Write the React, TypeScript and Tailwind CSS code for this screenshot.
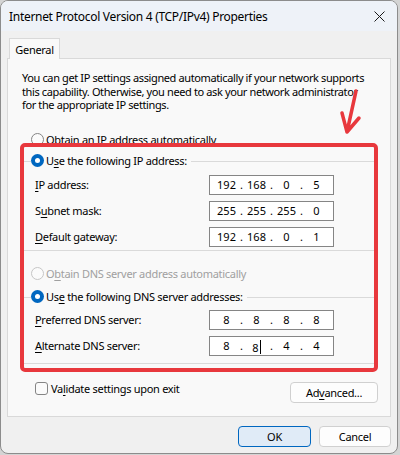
import { Fragment, ReactNode } from 'react';

const line = 'border-[#dadada]';

function Radio({ checked = false, disabled = false }: { checked?: boolean; disabled?: boolean }) {
  if (checked) {
    return (
      <span className="flex size-[13px] shrink-0 items-center justify-center rounded-full bg-[#0067c0]">
        <span className="size-[5px] rounded-full bg-white" />
      </span>
    );
  }
  return (
    <span
      className={`size-[13px] shrink-0 rounded-full border bg-[#fbfbfb] ${
        disabled ? 'border-[#c6c6c6]' : 'border-[#858585]'
      }`}
    />
  );
}

function IpBox({ parts, caret }: { parts: string[]; caret?: number }) {
  return (
    <div className="flex h-[20px] w-[125px] items-center border border-[#858585] bg-white pl-[3px] tracking-normal">
      {parts.map((p, i) => (
        <Fragment key={i}>
          <span className="w-[27px] text-center">
            {p}
            {caret === i && <span className="ml-px inline-block h-[14px] w-px translate-y-[2px] bg-black" />}
          </span>
          {i < 3 && <span className="w-[3px] text-center">.</span>}
        </Fragment>
      ))}
    </div>
  );
}

function Row({ label, children }: { label: ReactNode; children: ReactNode }) {
  return (
    <div className="flex h-[26px] items-center pl-[14px]">
      <span className="w-[174px]">{label}</span>
      {children}
    </div>
  );
}

function Group({ legend, className, children }: { legend: ReactNode; className?: string; children: ReactNode }) {
  return (
    <div className={`mx-[12px] ${className ?? ''}`}>
      <div className="flex h-[20px]">
        <div className={`h-[10px] w-[11px] self-end border-l border-t ${line}`} />
        <div className="flex items-center gap-[2px] pr-[4px]">
          <Radio checked />
          <span>{legend}</span>
        </div>
        <div className={`h-[10px] flex-1 self-end border-r border-t ${line}`} />
      </div>
      <div className={`border-x border-b ${line}`}>{children}</div>
    </div>
  );
}

const U = ({ children }: { children: ReactNode }) => <span className="underline underline-offset-[2px]">{children}</span>;

export default function App() {
  return (
    <div className="h-[455px] w-[400px] bg-[#d4d4d4] font-['Segoe_UI','Noto_Sans',sans-serif] text-[11px] leading-[13px] tracking-[-0.3px] text-black">
      <div className="relative flex h-[454px] w-[398px] flex-col overflow-hidden rounded-[8px] border border-[#8c8c8c] bg-[#f0f0f0]">
        {/* title bar */}
        <div className="flex h-[30px] shrink-0 items-center justify-between bg-[#eef2f8] pl-[8px] pr-[12px] text-[12px]">
          <span>Internet Protocol Version 4 (TCP/IPv4) Properties</span>
          <svg width="11" height="11" viewBox="0 0 11 11" className="text-[#1a1a1a]">
            <path d="M0.5 0.5 L10.5 10.5 M10.5 0.5 L0.5 10.5" stroke="currentColor" strokeWidth="1" />
          </svg>
        </div>

        <div className="px-[6px] pt-[7px]">
          <div className="flex">
            <div className="relative z-10 -mb-px ml-[2px] flex h-[21px] w-[51px] items-center justify-center border-x border-t border-[#d9d9d9] bg-[#f9f9f9]">
              General
            </div>
          </div>

          <div className="border border-[#d9d9d9] bg-[#f9f9f9] pb-[13px]">
            <p className="mt-[12px] whitespace-nowrap pl-[14px] leading-[13.5px] tracking-[-0.38px]">
              You can get IP settings assigned automatically if your network supports
              <br />
              this capability. Otherwise, you need to ask your network administrator
              <br />
              for the appropriate IP settings.
            </p>

            <div className="mt-[18px] flex h-[20px] items-center gap-[2px] pl-[23px]">
              <Radio />
              <span>Obtain an IP address automatically</span>
            </div>

            <Group
              className="mt-[1px]"
              legend={
                <>
                  U<U>s</U>e the following IP address:
                </>
              }
            >
              <div className="pt-[1px]">
                <Row
                  label={
                    <>
                      <U>I</U>P address:
                    </>
                  }
                >
                  <IpBox parts={['192', '168', '0', '5']} />
                </Row>
                <Row
                  label={
                    <>
                      S<U>u</U>bnet mask:
                    </>
                  }
                >
                  <IpBox parts={['255', '255', '255', '0']} />
                </Row>
                <Row
                  label={
                    <>
                      <U>D</U>efault gateway:
                    </>
                  }
                >
                  <IpBox parts={['192', '168', '0', '1']} />
                </Row>
              </div>
            </Group>

            <div className="mt-[13px] flex h-[20px] items-center gap-[2px] pl-[23px] text-[#a0a0a0]">
              <Radio disabled />
              <span>
                O<U>b</U>tain DNS server address automatically
              </span>
            </div>

            <Group
              className="mt-[3px]"
              legend={
                <>
                  Us<U>e</U> the following DNS server addresses:
                </>
              }
            >
              <div className="pb-[4px]">
                <Row
                  label={
                    <>
                      <U>P</U>referred DNS server:
                    </>
                  }
                >
                  <IpBox parts={['8', '8', '8', '8']} />
                </Row>
                <Row
                  label={
                    <>
                      <U>A</U>lternate DNS server:
                    </>
                  }
                >
                  <IpBox parts={['8', '8', '4', '4']} caret={1} />
                </Row>
              </div>
            </Group>

            <div className="mt-[18px] flex items-start justify-between pl-[27px] pr-[12px]">
              <div className="flex h-[13px] items-center gap-[3px]">
                <span className="size-[13px] rounded-[3px] border border-[#858585] bg-[#fbfbfb]" />
                <span>
                  Va<U>l</U>idate settings upon exit
                </span>
              </div>
              <button className="flex h-[21px] w-[88px] items-center justify-center rounded-[4px] border border-[#d0d0d0] bg-[#fdfdfd]">
                <span>
                  Ad<U>v</U>anced...
                </span>
              </button>
            </div>
          </div>
        </div>

        <div className="mt-[9px] flex justify-end gap-[8px] pr-[6px]">
          <button className="flex h-[21px] w-[73px] items-center justify-center rounded-[4px] border border-[#0067c0] bg-[#e0ebf7]">
            OK
          </button>
          <button className="flex h-[21px] w-[72px] items-center justify-center rounded-[4px] border border-[#d0d0d0] bg-[#fdfdfd]">
            Cancel
          </button>
        </div>

        {/* annotation overlay */}
        <div className="pointer-events-none absolute left-[19px] top-[142px] h-[229px] w-[358px] rounded-[5px] border-[4px] border-[#e8383d]" />
        <svg
          className="pointer-events-none absolute left-[330px] top-[80px]"
          width="40"
          height="60"
          viewBox="330 80 40 60"
        >
          <path
            d="M355 90 L346 131 M341 112 L346 131 L358 117"
            fill="none"
            stroke="#e8383d"
            strokeWidth="3.5"
            strokeLinecap="round"
            strokeLinejoin="round"
          />
        </svg>
      </div>
    </div>
  );
}
